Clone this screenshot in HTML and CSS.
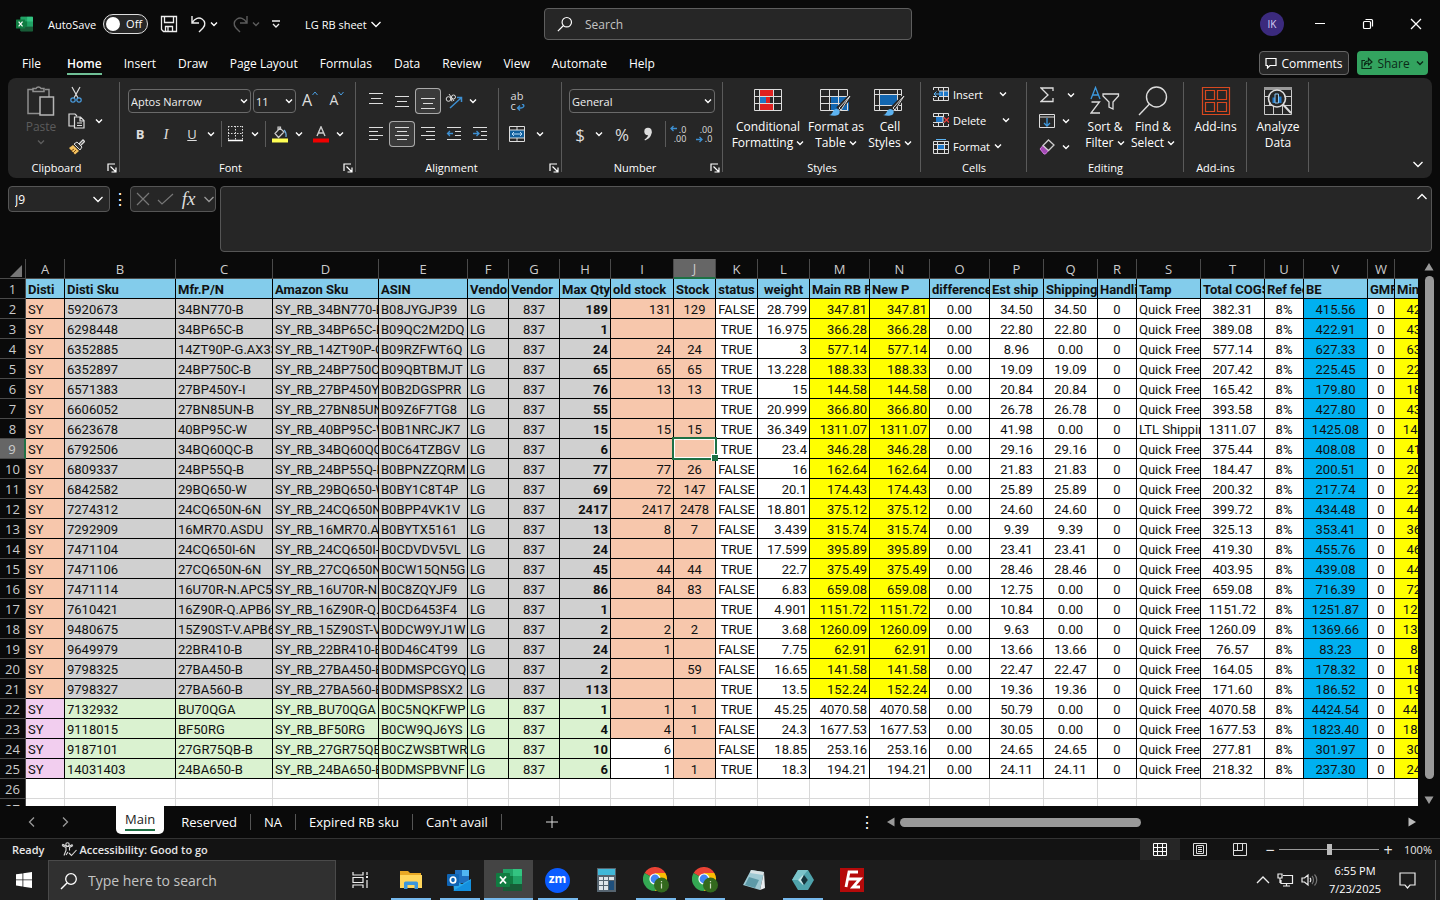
FILE: index.html
```html
<!DOCTYPE html>
<html lang="en">
<head>
    <meta charset="utf-8">
    <title>LG RB sheet</title>
    <link rel="stylesheet" href="styles.css">
</head>
<body>
    <!-- shared icons -->
    <svg class="defs" width="0" height="0">
        <symbol id="chev" viewBox="0 0 8 8"><path d="M1 2.5l3 3 3-3" fill="none" stroke="currentColor" stroke-width="1.4"/></symbol>
        <symbol id="wide" viewBox="0 0 12 12"><path d="M1.500 4L6 8.500 10.500 4" fill="none" stroke="currentColor" stroke-width="1.3"/></symbol>
        <symbol id="launch" viewBox="0 0 10 10"><path d="M1 8V1h7M3.500 3.500l5 5M9 4.500V9H4.500" fill="none" stroke="currentColor" stroke-width="1.2"/></symbol>
        <symbol id="lens" viewBox="0 0 18 18"><circle cx="11" cy="7" r="5.3" fill="none" stroke="currentColor" stroke-width="1.3"/><path d="M7 11l-6 6" stroke="currentColor" stroke-width="1.4"/></symbol>
        <symbol id="excel" viewBox="0 0 26 22">
            <rect x="7" y="0" width="19" height="22" rx="1" fill="#21a366"/>
            <path d="M7 0h10v7H7z" fill="#21a366"/><path d="M17 0h8a1 1 0 0 1 1 1v6h-9z" fill="#33c481"/>
            <path d="M7 7h10v8H7z" fill="#107c41"/><path d="M7 15h19v7H7z" fill="#185c37"/>
            <rect x="0" y="4" width="14" height="14" rx="1" fill="#107c41"/>
            <path d="M4 7.500l6 7M10 7.500l-6 7" stroke="#fff" stroke-width="1.8"/>
        </symbol>
        <symbol id="chrome" viewBox="0 0 26 26">
            <path d="M12 12L1.600 6A12 12 0 0 1 22.400 6z" fill="#ea4335"/>
            <path d="M12 12V6h10.400A12 12 0 0 1 12 24z" fill="#fbbc04"/>
            <path d="M12 12l5 3-5 9A12 12 0 0 1 1.600 6z" fill="#34a853"/>
            <circle cx="12" cy="12" r="5.6" fill="#fff"/><circle cx="12" cy="12" r="4.4" fill="#4285f4"/>
            <circle cx="18.5" cy="18" r="7.5" fill="#33691e"/>
            <path d="M18.500 16.500v5M18.500 14v1.200" stroke="#cddcc0" stroke-width="1.2"/>
        </symbol>
    </svg>

    <header class="titlebar">
        <div class="quick">
            <svg class="logo" width="17" height="16"><use href="#excel"/></svg>
            <label class="autosave">AutoSave
                <span class="switch"><input type="checkbox" role="switch"><span class="off">Off</span></span>
            </label>
            <button class="qbtn save" title="Save"><svg width="18" height="18" fill="none" stroke="#eee" stroke-width="1.3"><path d="M1.500 1.500h15v15h-13l-2-2zM4.500 1.500v6h9v-6M5.500 16.500v-5h7v5M8 12v4"/></svg></button>
            <button class="qbtn" title="Undo"><svg width="17" height="18" fill="none" stroke="#eee" stroke-width="1.4"><path d="M2 1v7h7M2 8c3-5 7-6 10-4s4 6 1 9l-4 4"/></svg></button>
            <button class="chev" title="Undo list"><svg width="8" height="8"><use href="#chev"/></svg></button>
            <button class="qbtn dim" title="Redo"><svg width="17" height="18" fill="none" stroke="currentColor" stroke-width="1.4"><path d="M15 1v7H8M15 8C12 3 8 2 5 4s-4 6-1 9l4 4"/></svg></button>
            <button class="chev dim" title="Redo list"><svg width="8" height="8"><use href="#chev"/></svg></button>
            <button class="custom" title="Customize"><svg width="8" height="8" fill="none" stroke="#eee" stroke-width="1.3"><path d="M0 1h8M1 4l3 3 3-3"/></svg></button>
            <button class="docname">LG RB sheet <svg width="12" height="12"><use href="#wide"/></svg></button>
        </div>
        <label class="search">
            <svg width="16" height="16"><use href="#lens"/></svg>
            <input type="text" placeholder="Search" aria-label="Search">
        </label>
        <div class="winctl">
            <button class="avatar" title="Account">IK</button>
            <button class="win" title="Minimize"><svg width="12" height="12"><path d="M1 5.500h10" stroke="#fff"/></svg></button>
            <button class="win" title="Restore"><svg width="12" height="12" fill="none" stroke="#fff" stroke-width="1.2"><rect x="1.5" y="3.5" width="7" height="7" rx="1"/><path d="M3.500 1.500h6a1 1 0 0 1 1 1v6"/></svg></button>
            <button class="win" title="Close"><svg width="12" height="12"><path d="M1 1l10 10M11 1L1 11" stroke="#fff" stroke-width="1.3"/></svg></button>
        </div>
    </header>

    <nav class="menu">
        <a href="#">File</a>
        <a href="#" class="active">Home</a>
        <a href="#">Insert</a>
        <a href="#">Draw</a>
        <a href="#">Page Layout</a>
        <a href="#">Formulas</a>
        <a href="#">Data</a>
        <a href="#">Review</a>
        <a href="#">View</a>
        <a href="#">Automate</a>
        <a href="#">Help</a>
        <button class="comments"><svg width="12" height="12" fill="none" stroke="#fff" stroke-width="1.2"><path d="M1 1.500h10v7H5L2.500 11V8.500H1z"/></svg>Comments</button>
        <button class="share"><svg width="12" height="12" fill="none" stroke="#0b2a17" stroke-width="1.2"><path d="M4 3.500H1v8h9V9M3.500 8c0-3 2-4 4-4V1.500L11 5 7.500 8V6C6 6 4.500 6.500 3.500 8z"/></svg>Share<svg class="sc" width="8" height="8"><use href="#chev"/></svg></button>
    </nav>

    <section class="ribbon">
        <div class="group clipboard">
            <div class="tools">
                <button class="big paste dim">
                    <svg width="28" height="30" fill="none" stroke="#8f8f8f" stroke-width="1.5"><path d="M5.500 3.500H1v24h12M18 3.500h4V11M6 5.500V2.500h3a2.800 2.800 0 0 1 5 0h3v3z"/><path d="M13 11h13.500v18H13z" stroke="#b5b5b5"/></svg>
                    <span>Paste</span>
                    <svg width="8" height="8"><use href="#chev"/></svg>
                </button>
                <div class="stack">
                    <div class="line"><button class="ib" title="Cut"><svg width="12" height="18" fill="none" stroke-width="1.2"><path d="M2 1l6 11M10 1L4 12" stroke="#ddd"/><circle cx="3" cy="14" r="2.2" stroke="#4a9de0"/><circle cx="9" cy="14" r="2.2" stroke="#4a9de0"/></svg></button></div>
                    <div class="line"><button class="ib" title="Copy"><svg width="17" height="16" fill="none" stroke="#ddd" stroke-width="1.2"><path d="M6 13H1V1h6l2 2M6.500 4h6l3.500 3.500V15H6.500zM12 4v4h4M9 10h5M9 12.500h5"/></svg></button><button class="chev gap"><svg width="8" height="8"><use href="#chev"/></svg></button></div>
                    <div class="line"><button class="ib" title="Format Painter"><svg width="17" height="16"><path d="M11 5l4-4 1.500 1.500-4 4" fill="none" stroke="#ddd" stroke-width="1.3"/><path d="M6 5l3-2 5 5-2 3z" fill="#333" stroke="#ddd"/><path d="M5 6l6 6-4 3.500L1 9z" fill="#f3c15f"/><path d="M3 12l3-2M5 14l3-3" stroke="#7a4a12"/></svg></button></div>
                </div>
            </div>
            <div class="caption">Clipboard<svg width="10" height="10"><use href="#launch"/></svg></div>
        </div>

        <div class="group font">
            <div class="tools rows">
                <div class="line">
                    <span class="pick name"><select aria-label="Font"><option>Aptos Narrow</option></select><svg width="8" height="8"><use href="#chev"/></svg></span>
                    <span class="pick size"><select aria-label="Font size"><option>11</option></select><svg width="8" height="8"><use href="#chev"/></svg></span>
                    <button class="ib grow" title="Increase">A<svg width="6" height="5" fill="none" stroke="#4a9de0"><path d="M.5 4L3 1l2.500 3"/></svg></button>
                    <button class="ib grow less" title="Decrease">A<svg width="6" height="5" fill="none" stroke="#4a9de0"><path d="M.5 1L3 4l2.500-3"/></svg></button>
                </div>
                <div class="line">
                    <button class="ib"><b>B</b></button>
                    <button class="ib serif"><i>I</i></button>
                    <button class="ib"><u>U</u></button>
                    <button class="chev"><svg width="8" height="8"><use href="#chev"/></svg></button>
                    <span class="sep"></span>
                    <button class="ib" title="Borders"><svg width="16" height="16" fill="none" stroke="#ddd"><path d="M.5 0v14M7.500 0v14M14.500 0v14M0 .5h15M0 7.500h15" stroke-dasharray="1.5 1.5"/><path d="M0 14.500h15" stroke="#fff" stroke-width="1.5"/></svg></button>
                    <button class="chev"><svg width="8" height="8"><use href="#chev"/></svg></button>
                    <span class="sep"></span>
                    <button class="ib" title="Fill color"><svg width="16" height="17" fill="none" stroke="#ccc" stroke-width="1.2"><path d="M3 7.500L8 2l4 4-5.500 5.500zM6 4V1h2.500v3"/><path d="M12 4c2 2 2.500 3.500 2 7" stroke="#6fb3e6"/><path d="M0 14.500h16" stroke="#ffff54" stroke-width="4"/></svg></button>
                    <button class="chev"><svg width="8" height="8"><use href="#chev"/></svg></button>
                    <button class="ib fcolor" title="Font color"><svg width="16" height="17" fill="none" stroke="#ccc" stroke-width="1.4"><path d="M4 10L8 .8 12 10M5.400 7h5.200"/><path d="M0 14.500h16" stroke="#f00000" stroke-width="4"/></svg></button>
                    <button class="chev"><svg width="8" height="8"><use href="#chev"/></svg></button>
                </div>
            </div>
            <div class="caption">Font<svg width="10" height="10"><use href="#launch"/></svg></div>
        </div>

        <div class="group align">
            <div class="tools">
                <div class="rows">
                    <div class="line">
                        <button class="ib"><svg width="16" height="16" stroke="#ddd"><path d="M1 .5h14M3 5.500h10M1 10.500h14"/></svg></button>
                        <button class="ib"><svg width="16" height="16" stroke="#ddd"><path d="M1 3.500h14M3 8.500h10M1 13.500h14"/></svg></button>
                        <button class="ib on"><svg width="16" height="16" stroke="#ddd"><path d="M1 5.500h14M3 10.500h10M1 15.500h14"/></svg></button>
                        <button class="ib"><svg width="18" height="17" fill="none" stroke="#ddd"><circle cx="3.5" cy="6" r="2.3"/><path d="M5.500 3.500l1.500 5"/><path d="M4 1l5 7"/><circle cx="8.500" cy="4" r="2"/><path d="M5 15L16 5M12 4.500h4.500V9" stroke="#3d8fd1" stroke-width="1.5"/></svg></button>
                        <button class="chev"><svg width="8" height="8"><use href="#chev"/></svg></button>
                    </div>
                    <div class="line">
                        <button class="ib"><svg width="16" height="16" stroke="#ddd"><path d="M1 1.500h14M1 5.500h9M1 9.500h14M1 13.500h9"/></svg></button>
                        <button class="ib on"><svg width="16" height="16" stroke="#ddd"><path d="M1 1.500h14M3 5.500h10M1 9.500h14M3 13.500h10"/></svg></button>
                        <button class="ib"><svg width="16" height="16" stroke="#ddd"><path d="M1 1.500h14M6 5.500h9M1 9.500h14M6 13.500h9"/></svg></button>
                        <button class="ib"><svg width="16" height="16" fill="none" stroke="#ddd"><path d="M1 1.500h14M9 5.500h6M9 9.500h6M1 13.500h14"/><path d="M7 7.500H1.500M4 5L1.500 7.500 4 10" stroke="#3d8fd1" stroke-width="1.3"/></svg></button>
                        <button class="ib"><svg width="16" height="16" fill="none" stroke="#ddd"><path d="M1 1.500h14M9 5.500h6M9 9.500h6M1 13.500h14"/><path d="M1 7.500h6M4.500 5L7 7.500 4.500 10" stroke="#3d8fd1" stroke-width="1.3"/></svg></button>
                    </div>
                </div>
                <span class="sep tall"></span>
                <div class="rows">
                    <div class="line"><button class="ib wrap" title="Wrap Text"><span>ab<br>c</span><svg width="9" height="8" fill="none" stroke="#3d8fd1" stroke-width="1.4"><path d="M6 0c3 1 2 4-1 4H2M4 1.500L1.500 4 4 6.500"/></svg></button></div>
                    <div class="line"><button class="ib" title="Merge"><svg width="16" height="16" fill="none"><rect x=".5" y="4" width="15" height="8" fill="#0f5e9c"/><path d="M.5.500h15v15H.5zM.5 4h15M.5 12h15M8 .5V4M8 12v3.500" stroke="#ddd"/><path d="M3 8h10M5 6L3 8l2 2M11 6l2 2-2 2" stroke="#b9dcf7"/></svg></button><button class="chev gap"><svg width="8" height="8"><use href="#chev"/></svg></button></div>
                </div>
            </div>
            <div class="caption">Alignment<svg width="10" height="10"><use href="#launch"/></svg></div>
        </div>

        <div class="group number">
            <div class="tools rows">
                <div class="line"><span class="pick format"><select aria-label="Number format"><option>General</option></select><svg width="8" height="8"><use href="#chev"/></svg></span></div>
                <div class="line">
                    <button class="ib sym">$</button>
                    <button class="chev"><svg width="8" height="8"><use href="#chev"/></svg></button>
                    <button class="ib sym pct">%</button>
                    <button class="ib"><svg width="10" height="14"><circle cx="5" cy="4.5" r="3.7" fill="#ddd"/><path d="M8.700 4.500C8.700 9 6 12 2 13.500l-.5-1C4 11 5.500 9 5.500 6z" fill="#ddd"/></svg></button>
                    <span class="sep"></span>
                    <button class="ib dec"><span>.0<br>.00</span><svg width="7" height="7" fill="none" stroke="#3d8fd1" stroke-width="1.3"><path d="M7 3.500H1M3.500 1L1 3.500 3.500 6"/></svg></button>
                    <button class="ib dec low"><span>.00<br>.0</span><svg width="7" height="7" fill="none" stroke="#3d8fd1" stroke-width="1.3"><path d="M0 3.500h6M3.500 1L6 3.500 3.500 6"/></svg></button>
                </div>
            </div>
            <div class="caption">Number<svg width="10" height="10"><use href="#launch"/></svg></div>
        </div>

        <div class="group styles">
            <div class="tools">
                <button class="big w76">
                    <svg width="28" height="30" fill="none"><path d="M5 3h14v7H5zM12 10h4v8h-4zM5 18h14v7H5z" fill="#e02020"/><path d="M5 10h7v8H5z" fill="#1f78c8"/><path d="M.5 3.500h27v21H.5zM.5 10.500h27M.5 17.500h27M5.500 3v22M19.500 3v22" stroke="#ddd"/></svg>
                    <span>Conditional<br>Formatting <svg width="8" height="8"><use href="#chev"/></svg></span>
                </button>
                <button class="big w60">
                    <svg width="32" height="30" fill="none"><path d="M11 10h18v15H11z" fill="#1266b0"/><path d="M.5 3.500h27v21H.5zM.5 10.500h27M.5 17.500h27M9.500 3v22M18.500 3v22" stroke="#ddd"/><path d="M30 11L18 23" stroke="#262626" stroke-width="5"/><path d="M30 10L19 22l2 2z" fill="#262626" stroke="#ddd"/><path d="M9 29c4 0 3-5 7-6 4 0 5 4 2 6-2 1-6 1-9 0z" fill="#5cb2f0"/></svg>
                    <span>Format as<br>Table <svg width="8" height="8"><use href="#chev"/></svg></span>
                </button>
                <button class="big w48">
                    <svg width="32" height="30" fill="none"><path d="M5 8h19v12H5z" fill="#1266b0"/><path d="M.5 3.500h27v21H.5zM.5 8.500h27M.5 19.500h27M5.500 3v22M23.500 3v22" stroke="#ddd"/><path d="M30 11L18 23" stroke="#262626" stroke-width="5"/><path d="M30 10L19 22l2 2z" fill="#262626" stroke="#ddd"/><path d="M9 29c4 0 3-5 7-6 4 0 5 4 2 6-2 1-6 1-9 0z" fill="#5cb2f0"/></svg>
                    <span>Cell<br>Styles <svg width="8" height="8"><use href="#chev"/></svg></span>
                </button>
            </div>
            <div class="caption">Styles</div>
        </div>

        <div class="group cells">
            <div class="tools stack">
                <button class="row far"><svg width="16" height="14" fill="none"><path d="M6 4h9v6H6z" fill="#1f78c8"/><path d="M.5 3V.5h15v13H.5V11M5.500.5v3M10.500.5v3M5.500 10v3.500M10.500 4v9.500M6 4h9.500M6 9.500h9.500M0 9.500h4" stroke="#ddd"/><path d="M8 7H1M3.500 4.500L1 7l2.500 2.500" stroke="#5cb2f0"/></svg>Insert<svg class="rc" width="8" height="8"><use href="#chev"/></svg></button>
                <button class="row far"><svg width="16" height="14" fill="none"><path d="M3 4h7v6H3z" fill="#1f78c8"/><path d="M.5 3V.5h15V3M.5 11v2.500h15V11M5.500.5V4M10.500.5V4M5.500 10v3.500M10.500 10v3.500M0 3.500h10v6H0" stroke="#ddd"/><path d="M11 4.500l5 5M16 4.500l-5 5" stroke="#e84040" stroke-width="1.3"/></svg>Delete<svg class="rc" width="8" height="8"><use href="#chev"/></svg></button>
                <button class="row"><svg width="16" height="15" fill="none"><path d="M4 5h8v6H4z" fill="#1f78c8"/><path d="M.5 2.500h15v12H.5zM.5 5.500h15M.5 10.500h15M4.500 2v12M11.500 2v12" stroke="#ddd"/><path d="M3 .5h10" stroke="#5cb2f0"/></svg>Format<svg class="rc" width="8" height="8"><use href="#chev"/></svg></button>
            </div>
            <div class="caption">Cells</div>
        </div>

        <div class="group editing">
            <div class="tools">
                <div class="stack">
                    <div class="line"><button class="ib" title="AutoSum"><svg width="14" height="16" fill="none" stroke="#ddd" stroke-width="1.3"><path d="M13 4V1H1l7 7-7 6.500h12V11"/></svg></button><button class="chev sum"><svg width="8" height="8"><use href="#chev"/></svg></button></div>
                    <div class="line"><button class="ib" title="Fill"><svg width="16" height="14" fill="none"><path d="M.5.500h15v13H.5zM.5 3h15" stroke="#ddd"/><path d="M8 4v8M5 9l3 3 3-3" stroke="#3d9ae0" stroke-width="1.3"/></svg></button><button class="chev"><svg width="8" height="8"><use href="#chev"/></svg></button></div>
                    <div class="line"><button class="ib" title="Clear"><svg width="16" height="16" fill="none"><path d="M1 10l3-3.500 5.500 5L6.500 15H5z" fill="#a349b5" stroke="#d47be0"/><path d="M4 6.500L9.500 1 15 6l-5.500 5.500z" stroke="#ccc" stroke-width="1.3"/></svg></button><button class="chev"><svg width="8" height="8"><use href="#chev"/></svg></button></div>
                </div>
                <button class="big w48">
                    <svg width="30" height="30" fill="none" stroke-width="1.3"><path d="M1 13L5.500 1.500 10 13M2.500 9h6" stroke="#3d9ae0"/><path d="M1.500 16h8L1 27h9" stroke="#ddd"/><path d="M13 8h15.500v2L23 16v7l-4-2v-5l-6-6z" stroke="#ddd"/></svg>
                    <span>Sort &amp;<br>Filter <svg width="8" height="8"><use href="#chev"/></svg></span>
                </button>
                <button class="big w48">
                    <svg width="30" height="30" fill="none" stroke="#ddd" stroke-width="1.4"><circle cx="18.5" cy="11" r="10"/><path d="M11.500 18L1 29"/></svg>
                    <span>Find &amp;<br>Select <svg width="8" height="8"><use href="#chev"/></svg></span>
                </button>
            </div>
            <div class="caption">Editing</div>
        </div>

        <div class="group addins">
            <div class="tools">
                <button class="big">
                    <svg width="30" height="30" fill="none" stroke="#d8481f" stroke-width="1.2"><path d="M1.500 1.500h27v27h-27zM4.500 4.500h9v9h-9zM16.500 4.500h9v9h-9zM4.500 16.500h9v9h-9zM16.500 16.500h9v9h-9z"/></svg>
                    <span>Add-ins</span>
                </button>
            </div>
            <div class="caption">Add-ins</div>
        </div>

        <div class="group analyze">
            <div class="tools">
                <button class="big">
                    <svg width="28" height="30" fill="none"><path d="M.5 1.500h27v27H.5zM.5 10.500h27M.5 19.500h27M9.500 19v9M18.500 19v9M5.500 10v9" stroke="#ccc"/><path d="M0 2.500h28" stroke="#999" stroke-width="3"/><circle cx="13" cy="12.5" r="8.5" fill="#262626" stroke="#ddd" stroke-width="1.6"/><path d="M19 18.500l8 8.500" stroke="#ddd" stroke-width="2"/><path d="M8.500 11.500h3V17h-3zM14.500 10.500h3V17h-3z" fill="#1f78c8"/><path d="M11 8h3.500v9H11z" fill="#262626" stroke="#8cc6f2"/></svg>
                    <span>Analyze<br>Data</span>
                </button>
            </div>
        </div>
        <button class="collapse" title="Collapse"><svg width="12" height="12"><use href="#wide"/></svg></button>
    </section>

    <section class="formula">
        <div class="namebox"><input type="text" value="J9" aria-label="Name box"><svg width="12" height="12"><use href="#wide"/></svg></div>
        <span class="dots">⋮</span>
        <div class="fx">
            <button title="Cancel"><svg width="14" height="14"><path d="M1 1l12 12M13 1L1 13" stroke="#777" stroke-width="1.2"/></svg></button>
            <button title="Enter"><svg width="17" height="12"><path d="M1 7l4 4L16 1" fill="none" stroke="#777" stroke-width="1.2"/></svg></button>
            <button class="fn" title="Insert function">fx</button>
            <button title="More"><svg width="12" height="12"><use href="#wide"/></svg></button>
        </div>
        <div class="bar">
            <textarea aria-label="Formula"></textarea>
            <svg class="up" width="12" height="12"><use href="#wide"/></svg>
        </div>
    </section>

    <main class="sheet">
        <div class="grid"><table id="cells"></table></div>
        <div class="vscroll">
            <svg width="10" height="8"><path d="M5 0l4.500 7.500h-9z" fill="#999"/></svg>
            <div class="thumb"></div>
            <svg width="10" height="8"><path d="M5 8L.5.500h9z" fill="#999"/></svg>
        </div>
    </main>

    <section class="tabs">
        <button class="nav prev"><svg width="12" height="12"><use href="#wide"/></svg></button>
        <button class="nav next"><svg width="12" height="12"><use href="#wide"/></svg></button>
        <a href="#" class="current"><span>Main</span></a>
        <a href="#">Reserved</a>
        <a href="#">NA</a>
        <a href="#">Expired RB sku</a>
        <a href="#">Can't avail</a>
        <button class="add" title="New sheet"><svg width="12" height="12"><path d="M6 0v12M0 6h12" stroke="#ddd"/></svg></button>
        <span class="dots">⋮</span>
        <div class="hscroll">
            <svg width="8" height="10"><path d="M0 5L7.500.5v9z" fill="#999"/></svg>
            <div class="track"><div class="thumb"></div></div>
            <svg width="8" height="10"><path d="M8 5L.5.500v9z" fill="#bbb"/></svg>
        </div>
    </section>

    <footer class="status">
        <span>Ready</span>
        <span class="access"><svg width="17" height="15" fill="none" stroke="#ddd" stroke-width="1.1"><circle cx="6.5" cy="2.5" r="1.7"/><path d="M1 3.500l4 2v3l-2 5M12 3.500L8.500 5.500v3M1 3.500l1-1 4 2h1.500l4-2M5 13l2-3M8 11l2.500 2.500L15.500 8"/></svg>Accessibility: Good to go</span>
        <div class="views">
            <button class="on" title="Normal"><svg width="14" height="14" fill="none" stroke="#fff"><path d="M.5.500h13v12H.5zM.5 4.500h13M.5 8.500h13M4.500.5v12M9.500.5v12"/></svg></button>
            <button title="Page layout"><svg width="14" height="14" fill="none" stroke="#ddd"><path d="M.5.500h13v12H.5zM3.500 2.500h7v8h-7zM5 4.500h4M5 6.500h4M5 8.500h4"/></svg></button>
            <button title="Page break"><svg width="14" height="14" fill="none" stroke="#ddd"><path d="M.5.500h13v12H.5zM4.500.5v7M9.500.5v7M.5 7.500h9"/></svg></button>
        </div>
        <div class="zoom">
            <button>−</button>
            <input type="range" min="0" max="200" value="100" aria-label="Zoom">
            <button>+</button>
            <span>100%</span>
        </div>
    </footer>

    <footer class="taskbar">
        <button class="start" title="Start"><svg width="16" height="16" fill="#fff"><path d="M0 2.300L6.500 1.400v6.100H0zM7.300 1.300L16 0v7.500H7.300zM0 8.300h6.500v6.200L0 13.600zM7.300 8.300H16V16l-8.700-1.300z"/></svg></button>
        <label class="tsearch">
            <svg width="18" height="18"><use href="#lens"/></svg>
            <input type="text" placeholder="Type here to search" aria-label="Type here to search">
        </label>
        <button class="view" title="Task view"><svg width="17" height="16" fill="none" stroke="#eee" stroke-width="1.2"><path d="M1 0v3h10V0M1 5.500h10v5H1zM1 16v-3h10v3M15 0v3M15 8v8"/><path d="M14 5h2" stroke-width="2"/></svg></button>
        <button class="app run" title="Explorer"><svg width="22" height="20"><path d="M0 1h8l2 2h11v4H0z" fill="#e8a825"/><path d="M0 5h22v13H0z" fill="#ffd65c"/><path d="M4 19v-6a1.500 1.500 0 0 1 1.500-1.500h11A1.500 1.500 0 0 1 18 13v6h-3.500v-4h-7v4z" fill="#3a96dd"/></svg></button>
        <button class="app run" title="Outlook"><svg width="25" height="22"><path d="M8 1h14v13H8z" fill="#1f6fbf"/><path d="M15 1h7v6h-7z" fill="#50b5f2"/><path d="M6 11l9 4 9-5v12H7z" fill="#28a8ea"/><path d="M6 22l18-11v9a2 2 0 0 1-2 2z" fill="#1490df"/><rect y="5" width="12" height="12" rx="1" fill="#0f64b4"/><ellipse cx="6" cy="11" rx="2.7" ry="3" fill="none" stroke="#fff" stroke-width="1.7"/></svg></button>
        <button class="app run focus" title="Excel"><svg width="26" height="22"><use href="#excel"/></svg></button>
        <button class="app run" title="Zoom"><span class="zm">zm</span></button>
        <button class="app" title="Calculator"><svg width="19" height="24"><path d="M0 0h19v24H0z" fill="#56646f"/><path d="M1 1h17v6H1z" fill="#41b8d8"/><path d="M2 9h4v3H2zM7 9h4v3H7zM12 9h5v3h-5zM2 13h4v4H2zM7 13h4v4H7zM2 18h4v4H2zM7 18h4v4H7z" fill="#dfe5ea"/><path d="M12 13h5v9h-5z" fill="#1e4f7c"/></svg></button>
        <button class="app run" title="Chrome"><svg width="26" height="26"><use href="#chrome"/></svg></button>
        <button class="app run" title="Chrome"><svg width="26" height="26"><use href="#chrome"/></svg></button>
        <button class="app" title="Notepad"><svg width="22" height="22"><path d="M8 1l13 2-4 18L0 16z" fill="#9fc9d3"/><path d="M8 1l13 2-1 3L7 4z" fill="#d9e3e6"/><path d="M6 8l10 3-4 8-10-3z" fill="#5d9aa8"/><path d="M21 3l1 16-5 2z" fill="#e9eef0"/></svg></button>
        <button class="app run" title="Hex"><svg width="22" height="22"><path d="M6 1h10l6 10-6 10H6L0 11z" fill="#4fa3ac"/><path d="M6 1h10l-5 6-5 4H0z" fill="#7cc4ca"/><path d="M11 6l5 5-5 5-5-5z" fill="#c5e6e8"/><path d="M12 6l4 5-4 5-3-5z" fill="#14343c"/></svg></button>
        <button class="app" title="FileZilla"><svg width="24" height="24"><path d="M0 0h24v24H0z" fill="#b50a0a"/><path d="M6 19L9 4h9M7.500 11H14M12 11h8l-7 8h7" fill="none" stroke="#fff" stroke-width="2.8"/></svg></button>
        <div class="tray">
            <svg width="14" height="10"><path d="M1 8l6-6 6 6" fill="none" stroke="#eee" stroke-width="1.3"/></svg>
            <svg width="17" height="14" fill="none" stroke="#eee" stroke-width="1.2"><path d="M6 2.500h9.500v8H4V7M9.500 10.500V13M6 13h7M1 1h4v4H1zM3 5v5"/></svg>
            <svg width="17" height="14" fill="none" stroke="#eee" stroke-width="1.2"><path d="M1 5h2.500L7 2v10L3.500 9H1zM9 5c1 1 1 3 0 4"/><path d="M11 3c2 2 2 6 0 8M13.500 1.500c3 3 3 8 0 11" stroke="#777"/></svg>
            <div class="clock">6:55 PM<br>7/23/2025</div>
            <svg class="note" width="17" height="17" fill="none" stroke="#eee" stroke-width="1.2"><path d="M1 1h15v12h-5l-2.500 3L6 13H1z"/></svg>
        </div>
    </footer>

    <script src="sheet.js"></script>
</body>
</html>
```
FILE: styles.css
```css
* {
    box-sizing: border-box;
}

body {
    display: flex;
    flex-direction: column;
    height: 100vh;
    margin: 0;
    overflow: hidden;
    background: #0a0a0a;
    color: #fff;
    font-family: "Open Sans", "Noto Sans", sans-serif;
    font-size: 12px;
}

button, input, select, textarea {
    margin: 0;
    padding: 0;
    border: 0;
    background: none;
    color: inherit;
    font-family: inherit;
    font-size: inherit;
}

button {
    display: flex;
    align-items: center;
    justify-content: center;
    flex-shrink: 0;
}

svg {
    flex-shrink: 0;
}

a {
    color: inherit;
    text-decoration: none;
}

.defs {
    position: absolute;
}

.dim {
    color: #5c5c5c;
}

/* title bar */
.titlebar {
    display: grid;
    grid-template-columns: 1fr 368px 1fr;
    align-items: center;
    height: 48px;
    padding-left: 16px;
    flex-shrink: 0;
}

.quick {
    display: flex;
    align-items: center;
}

.autosave {
    display: flex;
    align-items: center;
    gap: 7px;
    margin-left: 15px;
    font-size: 11px;
}

.switch {
    position: relative;
    display: flex;
}

.switch input {
    appearance: none;
    width: 45px;
    height: 20px;
    border: 1px solid #ddd;
    border-radius: 10px;
    background: #262626;
}

.switch input::before {
    content: "";
    display: block;
    width: 14px;
    height: 14px;
    margin: 2px;
    border-radius: 50%;
    background: #fff;
}

.off {
    position: absolute;
    right: 6px;
    top: 2px;
    line-height: 16px;
}

.qbtn {
    width: 18px;
    margin-left: 11px;
}

.save {
    margin-left: 12px;
}

.chev {
    width: 12px;
    height: 24px;
}

.quick .chev {
    margin-left: 1px;
}

.custom {
    width: 12px;
    margin-left: 8px;
}

.docname {
    gap: 3px;
    margin-left: 23px;
    font-size: 11px;
}

.search {
    display: flex;
    align-items: center;
    gap: 12px;
    height: 32px;
    padding: 0 12px;
    border: 1px solid #5e5e5e;
    border-radius: 4px;
    background: #262626;
}

.search input {
    flex: 1;
    outline: none;
}

input::placeholder {
    color: #c4c4c4;
    opacity: 1;
}

.winctl {
    display: flex;
    align-items: center;
    justify-content: flex-end;
}

.avatar {
    width: 24px;
    height: 24px;
    margin-right: 12px;
    border-radius: 50%;
    background: #3b2a7d;
    color: #d8d0f5;
    font-size: 10px;
}

.win {
    width: 48px;
    height: 32px;
}

/* menu */
.menu {
    display: flex;
    align-items: center;
    gap: 22px;
    height: 30px;
    padding: 0 12px 0 22px;
    flex-shrink: 0;
}

.menu a {
    height: 24px;
    padding-top: 1px;
    line-height: 24px;
}

.menu .active {
    margin-left: 4px;
    font-weight: 600;
    border-bottom: 2px solid #6fc096;
}

.comments, .share {
    height: 24px;
    gap: 4px;
    border-radius: 4px;
}

.comments {
    width: 90px;
    margin-left: auto;
    border: 1px solid #666;
    background: #262626;
}

.share {
    width: 71px;
    margin-left: -14px;
    background: #33a35f;
    color: #0b2a17;
}

.sc {
    margin-left: 2px;
}

/* ribbon */
.ribbon {
    display: flex;
    height: 100px;
    margin: 0 8px;
    border-radius: 8px;
    background: #262626;
    flex-shrink: 0;
}

.group {
    position: relative;
    display: flex;
    flex-direction: column;
    padding: 4px 0 2px;
    flex-shrink: 0;
}

.group::after {
    content: "";
    position: absolute;
    top: 4px;
    right: 0;
    bottom: 6px;
    width: 1px;
    background: #5a5a5a;
}

.clipboard { width: 112px; }
.font { width: 236px; }
.align { width: 206px; }
.number { width: 161px; }
.styles { width: 198px; }
.cells { width: 106px; }
.editing { width: 157px; }
.addins { width: 63px; }
.analyze { width: 62px; }

.tools {
    display: flex;
    flex: 1;
}

.stack, .rows {
    display: flex;
    flex-direction: column;
}

.stack .line {
    height: 26px;
}

.rows {
    padding-top: 5px;
    gap: 5px;
}

.rows .line {
    height: 28px;
}

.line {
    display: flex;
    align-items: center;
}

.caption {
    position: relative;
    height: 16px;
    line-height: 16px;
    font-size: 11px;
    text-align: center;
}

.clipboard .caption, .font .caption, .align .caption, .number .caption {
    padding-right: 15px;
}

.caption svg {
    position: absolute;
    right: 3px;
    top: 3px;
}

.ib {
    width: 26px;
    height: 26px;
    color: #ddd;
    font-size: 13px;
    border-radius: 4px;
}

.on.ib {
    background: #3a3a3a;
    box-shadow: inset 0 0 0 1px #aaa;
}

.serif {
    font-family: "Liberation Serif", serif;
    font-size: 15px;
}

.gap {
    margin-left: 4px;
}

.sum {
    margin-left: 5px;
}

.sep {
    width: 1px;
    height: 26px;
    margin-left: 4px;
    margin-right: 1px;
    background: #5a5a5a;
    flex-shrink: 0;
}

.sep.tall {
    height: 62px;
    margin: 6px 5px 0;
}

.big {
    flex-direction: column;
    justify-content: flex-start;
    gap: 3px;
    padding-top: 4px;
    line-height: 16px;
}

.big.dim {
    color: #5c5c5c;
}

.w76 { width: 76px; }
.w60 { width: 60px; }
.w48 { width: 48px; }

.clipboard .tools {
    padding-left: 15px;
}

.paste {
    width: 36px;
    margin-right: 4px;
}

.font .tools {
    padding-left: 7px;
}

.pick {
    position: relative;
    display: flex;
    height: 24px;
    margin-left: 1px;
}

.pick select {
    appearance: none;
    width: 100%;
    padding: 0 2px;
    border: 1px solid #6a6a6a;
    border-radius: 4px;
    color: #eee;
    font-size: 11px;
}

.pick svg {
    position: absolute;
    right: 3px;
    top: 8px;
}

.name { width: 123px; }
.size { width: 43px; margin-left: 2px; }
.format { width: 146px; margin-left: 2px; }

.grow {
    align-items: flex-start;
    margin-left: 1px;
    padding-top: 3px;
    font-size: 16px;
    line-height: 18px;
}

.less {
    font-size: 14px;
}

.fcolor {
    margin-left: 3px;
}

.align .tools {
    padding-left: 7px;
}

.wrap {
    position: relative;
    text-align: left;
    font-size: 11px;
    line-height: 10px;
}

.wrap svg {
    position: absolute;
    right: 5px;
    bottom: 2px;
}

.number .tools {
    padding-left: 5px;
}

.sym {
    font-size: 17px;
}

.pct {
    margin-left: 4px;
}

.dec {
    position: relative;
    font-size: 9px;
    line-height: 9px;
    text-align: right;
}

.dec svg {
    position: absolute;
    left: 3px;
    top: 4px;
}

.dec.low svg {
    top: 15px;
}

.styles .tools {
    padding-left: 7px;
}

.cells .tools {
    padding-left: 12px;
}

.row {
    justify-content: flex-start;
    gap: 4px;
    height: 26px;
    padding-bottom: 2px;
    font-size: 11px;
}

.far .rc {
    margin-left: 12px;
}

.editing .tools {
    padding-left: 7px;
}

.editing .stack {
    width: 47px;
}

.addins .tools, .analyze .tools {
    justify-content: center;
}

.collapse {
    width: 28px;
    height: 28px;
    margin-left: auto;
    align-self: flex-end;
}

/* formula bar */
.formula {
    display: flex;
    align-items: flex-start;
    height: 81px;
    padding: 8px 8px 0;
    flex-shrink: 0;
}

.namebox, .fx, .bar {
    display: flex;
    align-items: center;
    height: 26px;
    border: 1px solid #555;
    border-radius: 4px;
    background: #262626;
}

.namebox {
    width: 102px;
    padding: 0 5px 0 6px;
}

.namebox input {
    flex: 1;
    min-width: 0;
}

.dots {
    width: 20px;
    line-height: 26px;
    font-size: 16px;
    text-align: center;
}

.fx {
    width: 86px;
    padding: 0 0 0 5px;
    justify-content: space-between;
    color: #999;
}

.fn {
    color: #ddd;
    font-family: "Liberation Serif", serif;
    font-size: 19px;
    font-style: italic;
}

.bar {
    flex: 1;
    align-items: flex-start;
    height: 66px;
    margin-left: 4px;
    padding: 4px 3px;
}

.bar textarea {
    flex: 1;
    height: 56px;
    resize: none;
}

.up {
    transform: rotate(180deg);
}

/* sheet */
.sheet {
    display: flex;
    flex: 1;
    min-height: 0;
}

.grid {
    flex: 1;
    min-width: 0;
    overflow: hidden;
    background: #fff;
}

table {
    table-layout: fixed;
    border-collapse: separate;
    border-spacing: 0;
    color: #111;
    font-family: Roboto, sans-serif;
    font-size: 13px;
}

th, td {
    height: 20px;
    padding: 2px 2px 0;
    border-right: 1px solid #000;
    border-bottom: 1px solid #000;
    line-height: 17px;
    overflow: hidden;
    white-space: nowrap;
}

thead th, tbody th {
    padding: 1px 0 0;
    border-color: #4a4a4a;
    background: #0a0a0a;
    color: #ccc;
    font-family: "Open Sans", sans-serif;
    font-weight: 400;
    line-height: 18px;
}

thead .corner {
    padding: 0 0 0 7px;
    line-height: 12px;
    vertical-align: bottom;
}

thead .sel, tbody .sel {
    background: #666;
}

thead .sel {
    border-bottom: 2px solid #1e7145;
    line-height: 17px;
}

tbody .sel {
    border-right: 2px solid #1e7145;
}

.head td {
    background: #83cceb;
    font-weight: 700;
}

.c { text-align: center; }
.r { text-align: right; }
.b { font-weight: 700; }

.peach { background: #f7c7ac; }
.grey { background: #d0d0d0; }
.green { background: #daf2d0; }
.pink { background: #f2ceef; }
.yellow { background: #ff0; }
.blue { background: #00b0f0; }

.empty td {
    border-color: #d8d8d8;
}

.cursor {
    position: relative;
    overflow: visible;
}

/* selection frame and fill handle */
.cursor::before {
    content: "";
    position: absolute;
    inset: -2px;
    border: 2px solid #1e7145;
    box-shadow: inset 0 0 0 1px #fff;
    z-index: 1;
}

.cursor::after {
    content: "";
    position: absolute;
    right: -3px;
    bottom: -3px;
    width: 6px;
    height: 6px;
    border-left: 1px solid #fff;
    border-top: 1px solid #fff;
    background: #1e7145;
    z-index: 2;
}

.vscroll {
    display: flex;
    flex-direction: column;
    align-items: center;
    gap: 5px;
    width: 22px;
    padding: 4px 0 2px;
}

.vscroll .thumb {
    flex: 1;
    width: 9px;
    margin-bottom: 12px;
    border-radius: 5px;
    background: #999;
}

/* sheet tabs */
.tabs {
    display: flex;
    align-items: center;
    height: 32px;
    padding-left: 15px;
    font-size: 13px;
    flex-shrink: 0;
}

.nav {
    width: 33px;
    color: #999;
}

.prev svg {
    transform: rotate(90deg);
}

.next svg {
    transform: rotate(-90deg);
}

.tabs a {
    padding: 0 13px;
    border-right: 1px solid #555;
    line-height: 16px;
}

.tabs .current {
    align-self: flex-start;
    height: 28px;
    margin: 0 4px 0 35px;
    padding: 4px 9px 0;
    border: 0;
    border-radius: 0 0 5px 5px;
    background: #fff;
    color: #222;
    line-height: 18px;
}

.current span {
    display: block;
    height: 21px;
    border-bottom: 2px solid #1e7145;
}

.tabs .add {
    margin-left: 44px;
}

.tabs .dots {
    margin-left: auto;
}

.hscroll {
    display: flex;
    align-items: center;
    gap: 5px;
    width: 38%;
    margin-right: 22px;
    padding: 0 2px 0 10px;
}

.track {
    flex: 1;
}

.track .thumb {
    width: 48%;
    height: 9px;
    border-radius: 5px;
    background: #999;
}

/* status bar */
.status {
    display: flex;
    align-items: center;
    height: 22px;
    padding: 0 8px 0 12px;
    border-top: 1px solid #333;
    background: #131313;
    font-size: 11px;
    font-weight: 600;
    color: #e6e6e6;
    flex-shrink: 0;
}

.access {
    display: flex;
    align-items: center;
    gap: 1px;
    margin-left: 17px;
}

.views {
    display: flex;
    margin-left: auto;
}

.views button {
    width: 40px;
    height: 21px;
}

.views .on {
    background: #262626;
}

.zoom {
    display: flex;
    align-items: center;
    gap: 3px;
    margin-left: 4px;
    font-weight: 400;
}

.zoom button {
    width: 12px;
    font-size: 16px;
    line-height: 16px;
}

.zoom input {
    appearance: none;
    width: 100px;
    height: 1px;
    background: #999;
}

.zoom input::-webkit-slider-thumb {
    appearance: none;
    width: 5px;
    height: 11px;
    background: #bbb;
}

.zoom span {
    margin-left: 7px;
}

/* taskbar */
.taskbar {
    display: flex;
    align-items: center;
    height: 40px;
    background: #1c1c1c;
    flex-shrink: 0;
}

.start, .view {
    width: 48px;
    height: 40px;
}

.view {
    margin-right: 2px;
}

.tsearch {
    display: flex;
    align-items: center;
    gap: 10px;
    width: 288px;
    height: 40px;
    padding: 0 11px;
    border: 1px solid #4a4a4a;
    border-bottom: 0;
    background: #303030;
    font-size: 14px;
}

.tsearch input {
    flex: 1;
    outline: none;
}

.app {
    position: relative;
    width: 49px;
    height: 40px;
}

.focus {
    background: #444;
}

.run::after {
    content: "";
    position: absolute;
    left: 5px;
    right: 4px;
    bottom: 0;
    height: 2px;
    background: #76b9ed;
}

.focus::after {
    left: 0;
    right: 0;
}

.zm {
    width: 25px;
    height: 25px;
    border-radius: 50%;
    background: #0b5cff;
    line-height: 22px;
    font-weight: 700;
}

.tray {
    display: flex;
    align-items: center;
    gap: 7px;
    height: 40px;
    margin: 0 4px 0 auto;
    padding-right: 19px;
    border-right: 1px solid #555;
    font-size: 11px;
}

.clock {
    width: 58px;
    margin-left: 1px;
    line-height: 18px;
    text-align: center;
}

.note {
    margin-left: 8px;
}
```
FILE: sheet.js
```js
// column letter, width, alignment, header text
var columns = [
    ["A", 39, "", "Disti"], ["B", 111, "", "Disti Sku"], ["C", 97, "", "Mfr.P/N"],
    ["D", 106, "", "Amazon Sku"], ["E", 89, "", "ASIN"], ["F", 41, "", "Vendor"],
    ["G", 51, "c", "Vendor"], ["H", 51, "r b", "Max Qty"], ["I", 63, "r", "old stock"],
    ["J", 42, "c", "Stock"], ["K", 42, "c", "status"], ["L", 52, "r", "weight"],
    ["M", 60, "r", "Main RB P"], ["N", 60, "r", "New P"], ["O", 60, "c", "difference"],
    ["P", 54, "c", "Est ship"], ["Q", 54, "c", "Shipping"], ["R", 39, "c", "Handling"],
    ["S", 64, "", "Tamp"], ["T", 64, "c", "Total COGS"], ["U", 39, "c", "Ref fee"],
    ["V", 64, "c", "BE"], ["W", 27, "c", "GMP"], ["", 64, "c", "Min"]
];

// sku | part | asin | qty | old | stock | status | weight | price | est ship | shipping | cogs | be | min
var data = [
    "5920673|34BN770-B|B08JYGJP39|189|131|129|FALSE|28.799|347.81|34.50|34.50|382.31|415.56|423.87",
    "6298448|34BP65C-B|B09QC2M2DQ|1|||TRUE|16.975|366.28|22.80|22.80|389.08|422.91|431.37",
    "6352885|14ZT90P-G.AX33|B09RZFWT6Q|24|24|24|TRUE|3|577.14|8.96|0.00|577.14|627.33|639.88",
    "6352897|24BP750C-B|B09QBTBMJT|65|65|65|TRUE|13.228|188.33|19.09|19.09|207.42|225.45|229.96",
    "6571383|27BP450Y-I|B0B2DGSPRR|76|13|13|TRUE|15|144.58|20.84|20.84|165.42|179.80|183.40",
    "6606052|27BN85UN-B|B09Z6F7TG8|55|||TRUE|20.999|366.80|26.78|26.78|393.58|427.80|436.36",
    "6623678|40BP95C-W|B0B1NRCJK7|15|15|15|TRUE|36.349|1311.07|41.98|0.00|1311.07|1425.08|1453.58",
    "6792506|34BQ60QC-B|B0C64TZBGV|6|||TRUE|23.4|346.28|29.16|29.16|375.44|408.08|416.24",
    "6809337|24BP55Q-B|B0BPNZZQRM|77|77|26|FALSE|16|162.64|21.83|21.83|184.47|200.51|204.52",
    "6842582|29BQ650-W|B0BY1C8T4P|69|72|147|FALSE|20.1|174.43|25.89|25.89|200.32|217.74|222.09",
    "7274312|24CQ650N-6N|B0BPP4VK1V|2417|2417|2478|FALSE|18.801|375.12|24.60|24.60|399.72|434.48|443.17",
    "7292909|16MR70.ASDU|B0BYTX5161|13|8|7|FALSE|3.439|315.74|9.39|9.39|325.13|353.41|360.48",
    "7471104|24CQ650I-6N|B0CDVDV5VL|24|||TRUE|17.599|395.89|23.41|23.41|419.30|455.76|464.88",
    "7471106|27CQ650N-6N|B0CW15QN5G|45|44|44|TRUE|22.7|375.49|28.46|28.46|403.95|439.08|447.86",
    "7471114|16U70R-N.APC5|B0C8ZQYJF9|86|84|83|FALSE|6.83|659.08|12.75|0.00|659.08|716.39|729.11",
    "7610421|16Z90R-Q.APB6|B0CD6453F4|1|||TRUE|4.901|1151.72|10.84|0.00|1151.72|1251.87|1276.91",
    "9480675|15Z90ST-V.APB6|B0DCW9YJ1W|2|2|2|TRUE|3.68|1260.09|9.63|0.00|1260.09|1369.66|1397.05",
    "9649979|22BR410-B|B0D46C4T99|24|1||FALSE|7.75|62.91|13.66|13.66|76.57|83.23|84.89",
    "9798325|27BA450-B|B0DMSPCGYQ|2||59|FALSE|16.65|141.58|22.47|22.47|164.05|178.32|181.89",
    "9798327|27BA560-B|B0DMSP8SX2|113|||TRUE|13.5|152.24|19.36|19.36|171.60|186.52|190.25",
    "7132932|BU70QGA|B0C5NQKFWP|1|1|1|TRUE|45.25|4070.58|50.79|0.00|4070.58|4424.54|4470.03",
    "9118015|BF50RG|B0CW9QJ6YS|4|4|1|FALSE|24.3|1677.53|30.05|0.00|1677.53|1823.40|1859.87",
    "9187101|27GR75QB-B|B0CZWSBTWR|10|6||FALSE|18.85|253.16|24.65|24.65|277.81|301.97|308.01",
    "14031403|24BA650-B|B0DMSPBVNF|6|1|1|TRUE|18.3|194.21|24.11|24.11|218.32|237.30|242.05"
];

function fill(row, i) {
    var late = row > 21;
    if (i == 0) return late ? "pink" : "peach";
    if (i < 8) return late ? "green" : "grey";
    if (i == 8) return row > 23 ? "" : "peach";
    if (i == 9) return "peach";
    if (i == 12 || i == 13) return late ? "" : "yellow";
    if (i == 21) return "blue";
    if (i == 23) return "yellow";
    return "";
}

var total = 26;
var cols = '<col style="width:26px">';
var letters = '<th class="corner"><svg width="14" height="12"><path d="M13 0v12H1z" fill="#777"/></svg></th>';
var heads = "<th>1</th>";
columns.forEach(function (c, i) {
    total += c[1];
    cols += '<col style="width:' + c[1] + 'px">';
    letters += '<th' + (c[0] == "J" ? ' class="sel"' : "") + ">" + c[0] + "</th>";
    // only these headings are centered, the rest start at the left edge
    heads += "<td" + (i == 10 || i == 11 ? ' class="c"' : "") + ">" + c[3] + "</td>";
});

var body = '<tr class="head">' + heads + "</tr>";
data.forEach(function (line, n) {
    var d = line.split("|");
    var row = n + 2;
    var tamp = row == 8 ? "LTL Shipping" : "Quick Free";
    var cells = ["SY", d[0], d[1], "SY_RB_" + d[1], d[2], "LG", "837", d[3], d[4], d[5], d[6], d[7],
        d[8], d[8], "0.00", d[9], d[10], "0", tamp, d[11], "8%", d[12], "0", d[13]];
    body += "<tr><th" + (row == 9 ? ' class="sel"' : "") + ">" + row + "</th>";
    cells.forEach(function (text, i) {
        var cls = columns[i][2] + " " + fill(row, i);
        if (row == 9 && i == 9) cls += " cursor";
        body += '<td class="' + cls.trim() + '">' + text + "</td>";
    });
    body += "</tr>";
});
for (var r = 26; r < 28; r++) {
    body += '<tr class="empty"><th>' + r + "</th>" + "<td></td>".repeat(columns.length) + "</tr>";
}

var table = document.getElementById("cells");
table.style.width = total + "px";
table.innerHTML = "<colgroup>" + cols + "</colgroup><thead><tr>" + letters + "</tr></thead><tbody>" + body + "</tbody>";
```
